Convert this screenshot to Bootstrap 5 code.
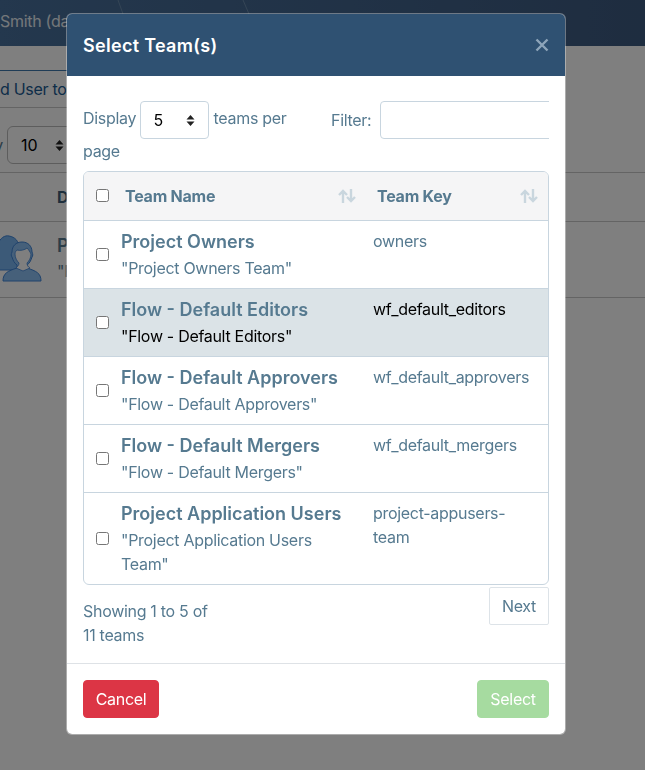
<!DOCTYPE html>
<html lang="en">
<head>
<meta charset="utf-8">
<title>Select Team(s)</title>
<link rel="stylesheet" href="https://cdn.jsdelivr.net/npm/bootstrap@5.3.0/dist/css/bootstrap.min.css">
<style>
html,body{height:100%;overflow:hidden}
body{font-family:Inter,"Liberation Sans",sans-serif;font-size:16px;line-height:24px;letter-spacing:-.3px;color:#567a90;background:#fff}
.pg-top{height:46px;background:linear-gradient(90deg,#48709c,#3d5a80);color:#e8eef4;position:relative;overflow:hidden;padding-top:9px;white-space:nowrap}
.pg-top svg{position:absolute;left:0;top:0}
.pg-tabs{margin-top:24px;height:38px;width:160px;border-top:1px solid #3f78ad;border-bottom:1px solid #c8c8c8;padding-top:6px;color:#1b5a92;white-space:nowrap;overflow:hidden}
.pg-filter{height:65px;padding:18px 0 0 0;border-bottom:1px solid #c8c8c8;display:flex;align-items:flex-start;margin-left:-15px}
.pg-lbl{width:22px;padding-top:7px;flex:none}
.pg-sel{width:90px;height:38px;border:1px solid #bbb;border-radius:6px;padding:6px 0 0 13px;color:#000;letter-spacing:0;background:no-repeat 47px center/9px 11px url("data:image/svg+xml,%3Csvg xmlns='http://www.w3.org/2000/svg' viewBox='0 0 9 11'%3E%3Cpath d='M4.5 0 8.5 4.5H.5zM4.5 11 .5 6.5h8z' fill='%23222'/%3E%3C/svg%3E")}
.pg-head{height:49px;border-bottom:1px solid #c8c8c8;padding:12px 0 0 57px;font-weight:700;color:#3d5f78}
.pg-row{height:76px;border-bottom:1px solid #c8c8c8;position:relative;padding:10px 0 0 57px}
.pg-row svg{position:absolute;left:0;top:10px}
.pg-t{font-size:18px;line-height:27px;font-weight:600;letter-spacing:0}
.modal-dialog.pick{margin:13px 0 0 66px;width:500px;max-width:500px}
.pick .modal-content{height:722px;border-color:rgba(255,255,255,.35);border-radius:6px;overflow:hidden}
.pick .modal-header{height:62px;background:#2f5172;color:#fff;padding:0 16px;border:0;border-radius:0}
.pick .modal-title{font-size:18px;line-height:27px;font-weight:600;letter-spacing:.3px}
.x-btn{background:none;border:0;padding:0;width:14px;height:14px;display:flex}
.pick .modal-body{padding:25px 16px 0;flex:1 1 auto;overflow:hidden}
.top-line{display:flex;height:62px;margin-bottom:8px;overflow:hidden}
.per-page{width:232px;flex:none}
.mini-sel{display:inline-block;width:69px;height:38px;vertical-align:middle;margin:0;padding:6px 12px;border-color:#c8d5df;border-radius:4px;color:#000;font-size:16px;line-height:24px;background-size:9px 11px;background-position:right 13px center;background-image:url("data:image/svg+xml,%3Csvg xmlns='http://www.w3.org/2000/svg' viewBox='0 0 9 11'%3E%3Cpath d='M4.5 0 8.5 4.5H.5zM4.5 11 .5 6.5h8z' fill='%23222'/%3E%3C/svg%3E")}
.flt{flex:1;display:flex;align-items:flex-start;min-width:0;padding-left:16px;overflow:hidden;gap:9px}
.flt label{line-height:38px;margin:0;white-space:nowrap}
.flt input{width:190px;flex:none;height:38px;border-color:#c8d5df;border-radius:4px}
.tbl-box{border:1px solid #c8d5df;border-radius:6px;overflow:hidden;height:414px}
.tbl-box table{table-layout:fixed;width:100%;margin:0;color:#567a90;--bs-table-color:#567a90;--bs-table-bg:transparent;--bs-table-border-color:#c8d5df}
.tbl-box th,.tbl-box td{padding:8px 12px;border-bottom:1px solid #c8d5df;box-shadow:none}
.tbl-box tr:last-child td{border-bottom:0}
.tbl-box thead th{height:48px;background:#f5f5f6;vertical-align:middle;font-weight:700;color:#567a90;letter-spacing:-.25px}
.c-chk{width:37px}
.c-name{width:240px}
.tbl-box td.cell-c,.tbl-box th.cell-c{padding:0 0 0 12px;vertical-align:middle}
.cell-c input{display:block;margin:0;width:13px;height:13px}
.tbl-box td.cell-n{padding:8px 0}
.tbl-box td.cell-k{padding:8px 12px;overflow-wrap:anywhere}
.tbl-box thead th.h-n{padding:0 0 0 4px}
.tbl-box thead th.h-k{padding:0 10px 0 16px}
.tbl-box thead .h-in{display:flex;justify-content:space-between;align-items:center}
.tbl-box thead th.h-n .h-in{padding-right:5px}
.t-name{font-size:18px;line-height:27px;font-weight:600;color:#567a90;letter-spacing:0;margin:-1px 0 1px}
.tbl-box tr.sel-row td{background:#dbe3e7;color:#000}
.tail{display:flex;justify-content:space-between;align-items:flex-start;padding-top:2px}
.tail-txt{width:140px;padding-top:12px}
.next-btn{width:60px;height:38px;padding:0;border:1px solid #dde3e8;border-radius:2px;color:#567a90;background:#fff;font-size:16px;letter-spacing:-.3px}
.pick .modal-footer{height:71px;padding:16px;justify-content:space-between;border-top-color:#dee2e6;flex:none}
.pick .modal-footer .btn{margin:0;height:38px;border-radius:4px;letter-spacing:-.3px}
.btn-cancel{width:76px;padding:0;--bs-btn-bg:#dc3545}
.btn-pick{width:72px;padding:0;--bs-btn-disabled-bg:#a6dba0;--bs-btn-disabled-border-color:#a6dba0;--bs-btn-disabled-opacity:1;--bs-btn-disabled-color:#fff}
</style>
</head>
<body>
<div class="pg-top">
  <svg width="645" height="46" fill="none" stroke="#6a8bab" stroke-width="1"><path d="M118 0 123 14M243 0 249 14"/></svg>
  Smith (dan.smith)
</div>
<div class="pg-tabs">d User to Team</div>
<div class="pg-filter"><div class="pg-lbl">by</div><div class="pg-sel">10</div></div>
<div class="pg-head">Display Name</div>
<div class="pg-row">
  <svg width="44" height="52" viewBox="0 0 44 52">
    <path d="M-2 38V12C0 6 5 3 9 4c6 1 10 5 10 12v22z" fill="#78b4f0" stroke="#3e84d8" stroke-width="1"/>
    <path d="M3 49c0-8 5-10 14-13v-3c-3-2-4-5-5-8-1-1-1-3 0-5 0-6 4-10 10-10s10 4 10 10c1 2 1 4 0 5-1 3-2 6-5 8v3c9 3 14 5 14 13z" fill="#8cc0f4" stroke="#3e84d8" stroke-width="1"/>
    <path d="M16 36c2-2 3-3 3-5-2-2-4-5-4-9 0-2 1-3 2-4 3 1 8 0 10-2 2 2 3 4 4 6 0 4-2 7-4 9 0 2 1 4 3 5l-7 3z" fill="#fff" stroke="#3e84d8" stroke-width=".8"/>
  </svg>
  <div class="pg-t">Project Owners</div>
  <div>"Project Owners Team"</div>
</div>

<div class="modal-backdrop show"></div>
<div class="modal d-block" tabindex="-1" role="dialog">
  <div class="modal-dialog pick">
    <div class="modal-content">
      <div class="modal-header">
        <h5 class="modal-title">Select Team(s)</h5>
        <button type="button" class="x-btn ms-auto" aria-label="Close">
          <svg width="14" height="14" viewBox="0 0 14 14"><path d="M1.5 1.5 12.5 12.5M12.5 1.5 1.5 12.5" stroke="#8ea5ba" stroke-width="2.4" fill="none"/></svg>
        </button>
      </div>
      <div class="modal-body">
        <div class="top-line">
          <div class="per-page">Display <select class="form-select mini-sel" aria-label="Teams per page"><option>5</option></select> teams per page</div>
          <div class="flt"><label>Filter:</label><input class="form-control" type="search" aria-label="Filter"></div>
        </div>
        <div class="tbl-box">
          <table class="table">
            <colgroup><col class="c-chk"><col class="c-name"><col></colgroup>
            <thead>
              <tr>
                <th class="cell-c"><input type="checkbox" aria-label="Select all"></th>
                <th class="h-n"><div class="h-in">Team Name
                  <svg width="18" height="14" viewBox="0 0 18 14" fill="none" stroke="#c9d6de" stroke-width="2.4"><path d="M5 14V2M1 6l4-4 4 4M13 0v12M9 8l4 4 4-4"/></svg></div></th>
                <th class="h-k"><div class="h-in">Team Key
                  <svg width="18" height="14" viewBox="0 0 18 14" fill="none" stroke="#c9d6de" stroke-width="2.4"><path d="M5 14V2M1 6l4-4 4 4M13 0v12M9 8l4 4 4-4"/></svg></div></th>
              </tr>
            </thead>
            <tbody>
              <tr>
                <td class="cell-c"><input type="checkbox" aria-label="Select"></td>
                <td class="cell-n"><div class="t-name">Project Owners</div>"Project Owners Team"</td>
                <td class="cell-k">owners</td>
              </tr>
              <tr class="sel-row">
                <td class="cell-c"><input type="checkbox" aria-label="Select"></td>
                <td class="cell-n"><div class="t-name">Flow - Default Editors</div>"Flow - Default Editors"</td>
                <td class="cell-k">wf_default_editors</td>
              </tr>
              <tr>
                <td class="cell-c"><input type="checkbox" aria-label="Select"></td>
                <td class="cell-n"><div class="t-name">Flow - Default Approvers</div>"Flow - Default Approvers"</td>
                <td class="cell-k">wf_default_approvers</td>
              </tr>
              <tr>
                <td class="cell-c"><input type="checkbox" aria-label="Select"></td>
                <td class="cell-n"><div class="t-name">Flow - Default Mergers</div>"Flow - Default Mergers"</td>
                <td class="cell-k">wf_default_mergers</td>
              </tr>
              <tr>
                <td class="cell-c"><input type="checkbox" aria-label="Select"></td>
                <td class="cell-n"><div class="t-name">Project Application Users</div>"Project Application Users Team"</td>
                <td class="cell-k">project-appusers-team</td>
              </tr>
            </tbody>
          </table>
        </div>
        <div class="tail">
          <div class="tail-txt">Showing 1 to 5 of 11 teams</div>
          <button type="button" class="next-btn">Next</button>
        </div>
      </div>
      <div class="modal-footer">
        <button type="button" class="btn btn-danger btn-cancel">Cancel</button>
        <button type="button" class="btn btn-success btn-pick" disabled>Select</button>
      </div>
    </div>
  </div>
</div>
<script src="https://cdn.jsdelivr.net/npm/bootstrap@5.3.0/dist/js/bootstrap.bundle.min.js"></script>
</body>
</html>
